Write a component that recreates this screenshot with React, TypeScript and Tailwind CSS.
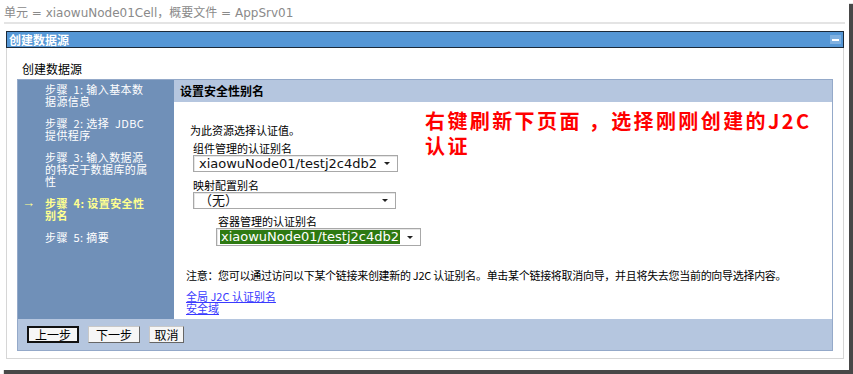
import React from "react";

const cjk = "font-['Noto_Sans_CJK_SC','Noto_Sans',sans-serif]";
const latin = "font-['DejaVu_Sans','Noto_Sans_CJK_SC',sans-serif]";

const steps: { lines: string[]; current?: boolean }[] = [
  { lines: ["步骤  1: 输入基本数", "据源信息"] },
  { lines: ["步骤  2: 选择  JDBC", "提供程序"] },
  { lines: ["步骤  3: 输入数据源", "的特定于数据库的属", "性"] },
  { lines: ["步骤  4: 设置安全性", "别名"], current: true },
  { lines: ["步骤  5: 摘要"] },
];

function Caret() {
  return (
    <svg width="8" height="5" viewBox="0 0 8 5" className="shrink-0">
      <path d="M1 1h6L4 4z" fill="#222" />
    </svg>
  );
}

function Select({
  value,
  width,
  selected,
}: {
  value: string;
  width: number;
  selected?: boolean;
}) {
  return (
    <div
      className="flex h-full items-center justify-between border border-[#a8a8a8] bg-white pl-[3px] pr-[6px] shadow-[inset_1px_1px_0_#e6e6e6]"
      style={{ width }}
    >
      <span
        className={
          selected
            ? `${latin} bg-[#2e7a12] px-px text-[13px] leading-[14px] text-white`
            : `${latin} px-[2px] text-[13px] leading-[14px] text-[#111]`
        }
      >
        {value}
      </span>
      <Caret />
    </div>
  );
}

function Button({ label, width, focused }: { label: string; width: number; focused?: boolean }) {
  return (
    <div
      className={
        focused
          ? `${cjk} flex h-[17px] items-center justify-center border-2 border-[#111] bg-[#f6f6f6] text-[12px] leading-none text-black`
          : `${cjk} flex h-[17px] items-center justify-center border border-[#c8c8c8] border-b-[#666] border-r-[#666] bg-[#f6f6f6] text-[12px] leading-none text-black`
      }
      style={{ width }}
    >
      {label}
    </div>
  );
}

export default function App() {
  return (
    <div className="relative h-[374px] w-[853px] overflow-hidden bg-white">
      <div className="h-[370px] w-[849px] bg-white pt-[4px] shadow-[4px_4px_1px_rgba(40,40,40,0.85)]">
        <div className={`${latin} pl-[4px] text-[12px] leading-[18px] text-[#8a8a8a]`}>
          单元 = xiaowuNode01Cell，概要文件 = AppSrv01
        </div>
        <div className="mx-[4px] h-[2px] bg-[#e4e4e4]" />

        <div className="ml-[6px] mt-[7px] w-[838px]">
          <div className="flex h-[17px] items-center justify-between border border-[#1b2a3a] bg-[#5597d6] pl-[2px] pr-[2px]">
            <span className={`${cjk} text-[12px] font-bold leading-none text-white`}>创建数据源</span>
            <span className="flex h-[9px] w-[11px] items-center justify-center bg-[#7fb0e0]">
              <span className="h-[2px] w-[7px] bg-white" />
            </span>
          </div>

          <div className="h-[311px] border-x border-b border-[#d6d6d6] pl-[10px] pr-[10px]">
            <div className={`${cjk} pl-[5px] pt-[14px] text-[12px] leading-[14px] text-black`}>创建数据源</div>

            <div className="mt-[3px] flex h-[272px] flex-col border border-[#94a9c9]">
              <div className="flex flex-1">
                <div className="w-[156px] bg-[#7090b8] pt-[3px]">
                  <div className="flex flex-col gap-[10px]">
                    {steps.map((s, i) => (
                      <div key={i} className="relative pl-[27px]">
                        {s.current && (
                          <span className="absolute left-[4px] top-[-1px] text-[13px] leading-[13px] text-[#ffff90]">→</span>
                        )}
                        <div
                          className={
                            s.current
                              ? `${cjk} whitespace-pre text-[11px] font-bold leading-[12px] tracking-[0.4px] text-[#ffff90]`
                              : `${cjk} whitespace-pre text-[11px] leading-[12px] tracking-[0.4px] text-white`
                          }
                        >
                          {s.lines.join("\n")}
                        </div>
                      </div>
                    ))}
                  </div>
                </div>

                <div className="relative flex-1">
                  <div className={`${cjk} flex h-[22px] items-center bg-[#b5c6df] pl-[6px] text-[12px] font-bold text-black`}>
                    设置安全性别名
                  </div>
                  <div className={`${cjk} text-[11px] text-black`}>
                    <div className="pl-[16px] pt-[21px] leading-[14px]">为此资源选择认证值。</div>
                    <div className="pl-[19px] leading-[14px] mt-[4px]">组件管理的认证别名</div>
                    <div className="ml-[19px] h-[17px]">
                      <Select value="xiaowuNode01/testj2c4db2" width={205} />
                    </div>
                    <div className="pl-[19px] leading-[14px] mt-[6px]">映射配置别名</div>
                    <div className="ml-[19px] h-[17px]">
                      <Select value="（无）" width={203} />
                    </div>
                    <div className="pl-[44px] leading-[14px] mt-[5px]">容器管理的认证别名</div>
                    <div className="ml-[42px] h-[18px]">
                      <Select value="xiaowuNode01/testj2c4db2" width={205} selected />
                    </div>
                    <div className="pl-[12px] mt-[22px] leading-[14px] tracking-[-0.3px] whitespace-nowrap">
                      注意：您可以通过访问以下某个链接来创建新的 J2C 认证别名。单击某个链接将取消向导，并且将失去您当前的向导选择内容。
                    </div>
                    <div className="pl-[12px] mt-[8px] whitespace-pre leading-[12px] text-[#3a3aff] underline">
                      {"全局 J2C 认证别名\n安全域"}
                    </div>
                  </div>

                  <div className={`${cjk} absolute left-[251px] top-[28px] text-[20px] font-bold leading-[25px] tracking-[2.4px] text-[#ff0000] whitespace-pre`}>
                    {"右键刷新下页面 ，选择刚刚创建的J2C\n认证"}
                  </div>
                </div>
              </div>

              <div className="flex h-[31px] gap-[9px] bg-[#b5c6df] pl-[9px] pt-[7px]">
                <Button label="上一步" width={52} focused />
                <Button label="下一步" width={52} />
                <Button label="取消" width={35} />
              </div>
            </div>
          </div>
        </div>
      </div>
    </div>
  );
}
